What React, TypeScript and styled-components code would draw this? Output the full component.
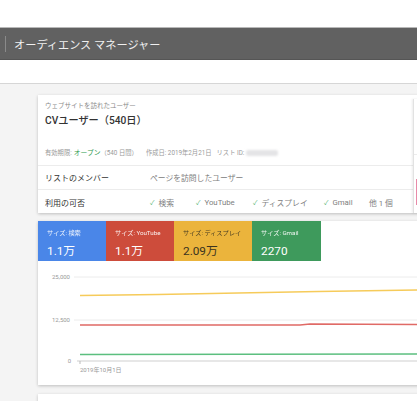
import React from "react";
import styled, { createGlobalStyle } from "styled-components";

const GlobalStyle = createGlobalStyle`
  html, body {
    margin: 0;
    padding: 0;
    background: #ffffff;
    font-family: Roboto, "Noto Sans CJK JP", "Noto Sans", sans-serif;
    overflow: hidden;
  }
`;

const Page = styled.div`
  width: 417px;
  height: 401px;
  overflow: hidden;
  display: flex;
  flex-direction: column;
  & > * {
    flex-shrink: 0;
  }
`;

const TopSpace = styled.div`
  height: 27px;
  background: #ffffff;
  border-bottom: 1px solid #b8b8b8;
`;

const AppBar = styled.div`
  height: 31px;
  background: #616161;
  border-bottom: 1px solid #555;
  display: flex;
  align-items: center;
`;

const BarDivider = styled.div`
  width: 1px;
  height: 16px;
  margin-left: 5px;
  background: #8a8a8a;
`;

const Title = styled.div`
  margin-left: 8px;
  color: #f0f0f0;
  font-size: 11.2px;
  font-weight: 400;
`;

const SubBar = styled.div`
  height: 23px;
  background: #ffffff;
  border-bottom: 1px solid #d6d6d6;
`;

const Main = styled.div`
  flex: 1;
  min-height: 0;
  overflow: hidden;
  background: #f4f4f4;
  padding: 11px 0 0 38px;
  display: flex;
  flex-direction: column;
  gap: 8px;
`;

const Card = styled.div`
  width: 400px;
  background: #ffffff;
  box-shadow: 0 1px 3px rgba(0, 0, 0, 0.22);
  flex-shrink: 0;
`;

const ListCard = styled(Card)`
  display: flex;
  height: 118px;
`;

const Info = styled.div`
  width: 375px;
  flex-shrink: 0;
`;

const Head = styled.div`
  padding: 6px 7px 6px;
  border-bottom: 1px solid #ececec;
`;

const Overline = styled.div`
  font-size: 6.5px;
  line-height: 10px;
  color: #8a8a8a;
`;

const ListName = styled.div`
  font-size: 10.2px;
  line-height: 20px;
  color: #333;
  font-weight: 500;
`;

const Meta = styled.div`
  margin-top: 16px;
  font-size: 6.3px;
  line-height: 12px;
  color: #9a9a9a;
  display: flex;
  align-items: center;
  white-space: nowrap;
`;

const Open = styled.span`
  color: #2e9a4e;
  font-size: 6.8px;
  margin-left: 2px;
`;

const MetaGap = styled.span<{ $gap: number }>`
  margin-left: ${(p) => p.$gap}px;
`;

const Blur = styled.span`
  display: inline-block;
  width: 32px;
  height: 6px;
  margin-left: 2px;
  background: #e4e4e6;
  border-radius: 2px;
  filter: blur(1px);
`;

const Row = styled.div<{ $last?: boolean }>`
  height: 24px;
  display: flex;
  align-items: center;
  padding-left: 7px;
  border-bottom: ${(p) => (p.$last ? "none" : "1px solid #ececec")};
  box-sizing: border-box;
`;

const RowLabel = styled.div`
  width: 105px;
  font-size: 8px;
  color: #333;
`;

const RowValue = styled.div`
  font-size: 7.8px;
  color: #808080;
  display: flex;
  align-items: center;
`;

const Channel = styled.span<{ $w: number }>`
  width: ${(p) => p.$w}px;
  display: inline-flex;
  align-items: center;
  gap: 4px;
  white-space: nowrap;
`;

const Check = styled.span`
  color: #4caf6a;
  font-size: 6.5px;
`;

const SidePanel = styled.div`
  flex: 1;
  margin-top: 4px;
  border-left: 1px solid #e2e2e2;
  box-shadow: -1px 0 2px rgba(0, 0, 0, 0.08);
  display: flex;
  flex-direction: column;
`;

const SideTop = styled.div`
  height: 55px;
  border-bottom: 1px solid #ececec;
`;

const Pink = styled.div`
  margin-top: 24px;
  height: 26px;
  margin-left: 2px;
  background: #e88aa8;
`;

const ChartCard = styled(Card)`
  height: 164px;
`;

const Tiles = styled.div`
  display: flex;
  height: 40px;
`;

const Tile = styled.div<{ $bg: string; $w: number; $dark?: boolean }>`
  width: ${(p) => p.$w}px;
  background: ${(p) => p.$bg};
  color: ${(p) => (p.$dark ? "#3a3320" : "#ffffff")};
  padding: 6px 0 0 9px;
  box-sizing: border-box;
  overflow: hidden;
`;

const TileLabel = styled.div`
  font-size: 6.2px;
  line-height: 12px;
  opacity: 0.92;
  white-space: nowrap;
`;

const TileValue = styled.div`
  font-size: 11.8px;
  line-height: 18px;
  margin-top: 3px;
`;

const Chart = styled.svg`
  display: block;
`;

const AxisText = styled.text`
  font-size: 6px;
  fill: #999;
  font-family: Roboto, "Noto Sans CJK JP", sans-serif;
`;

const NextCard = styled(Card)`
  height: 20px;
  margin-top: 1px;
`;

const channels = [
  { name: "検索", w: 46 },
  { name: "YouTube", w: 57 },
  { name: "ディスプレイ", w: 71 },
  { name: "Gmail", w: 45 },
];

const tiles = [
  { label: "サイズ: 検索", value: "1.1万", bg: "#4a86e8", w: 68 },
  { label: "サイズ: YouTube", value: "1.1万", bg: "#cd4c3b", w: 68 },
  { label: "サイズ: ディスプレイ", value: "2.09万", bg: "#ebb43c", w: 78, dark: true },
  { label: "サイズ: Gmail", value: "2270", bg: "#3e9a5c", w: 69 },
];

export default function App() {
  return (
    <Page>
      <GlobalStyle />
      <TopSpace />
      <AppBar>
        <BarDivider />
        <Title>オーディエンス マネージャー</Title>
      </AppBar>
      <SubBar />
      <Main>
        <ListCard>
          <Info>
            <Head>
              <Overline>ウェブサイトを訪れたユーザー</Overline>
              <ListName>CVユーザー（540日）</ListName>
              <Meta>
                有効期限:<Open>オープン</Open>（540 日間）
                <MetaGap $gap={8}>作成日: 2019年2月21日</MetaGap>
                <MetaGap $gap={5}>リスト ID:</MetaGap>
                <Blur />
              </Meta>
            </Head>
            <Row>
              <RowLabel>リストのメンバー</RowLabel>
              <RowValue>ページを訪問したユーザー</RowValue>
            </Row>
            <Row $last>
              <RowLabel>利用の可否</RowLabel>
              <RowValue>
                {channels.map((c) => (
                  <Channel key={c.name} $w={c.w}>
                    <Check>✓</Check>
                    {c.name}
                  </Channel>
                ))}
                <Channel $w={30}>他 1 個</Channel>
              </RowValue>
            </Row>
          </Info>
          <SidePanel>
            <SideTop />
            <Pink />
          </SidePanel>
        </ListCard>

        <ChartCard>
          <Tiles>
            {tiles.map((t) => (
              <Tile key={t.label} $bg={t.bg} $w={t.w} $dark={t.dark}>
                <TileLabel>{t.label}</TileLabel>
                <TileValue>{t.value}</TileValue>
              </Tile>
            ))}
          </Tiles>
          <Chart width="400" height="124" viewBox="0 0 400 124">
            <line x1="36" y1="16" x2="400" y2="16" stroke="#ececec" strokeWidth="1" />
            <line x1="36" y1="59" x2="400" y2="59" stroke="#ececec" strokeWidth="1" />
            <line x1="39" y1="100" x2="400" y2="100" stroke="#cfcfcf" strokeWidth="1" />
            <line x1="42" y1="100" x2="42" y2="103" stroke="#bbb" strokeWidth="1" />
            <AxisText x="32" y="18" textAnchor="end">25,000</AxisText>
            <AxisText x="32" y="61" textAnchor="end">12,500</AxisText>
            <AxisText x="33" y="102" textAnchor="end">0</AxisText>
            <AxisText x="42" y="111">2019年10月1日</AxisText>
            <polyline
              points="42,34.5 120,33.5 200,32 280,30.5 380,29"
              fill="none"
              stroke="#f6cb5a"
              strokeWidth="1.6"
            />
            <polyline
              points="42,64 262,64 272,63 380,63.5"
              fill="none"
              stroke="#e06a66"
              strokeWidth="1.6"
            />
            <polyline
              points="42,93.5 380,93"
              fill="none"
              stroke="#5cbf7f"
              strokeWidth="1.6"
            />
          </Chart>
        </ChartCard>
        <NextCard />
      </Main>
    </Page>
  );
}
